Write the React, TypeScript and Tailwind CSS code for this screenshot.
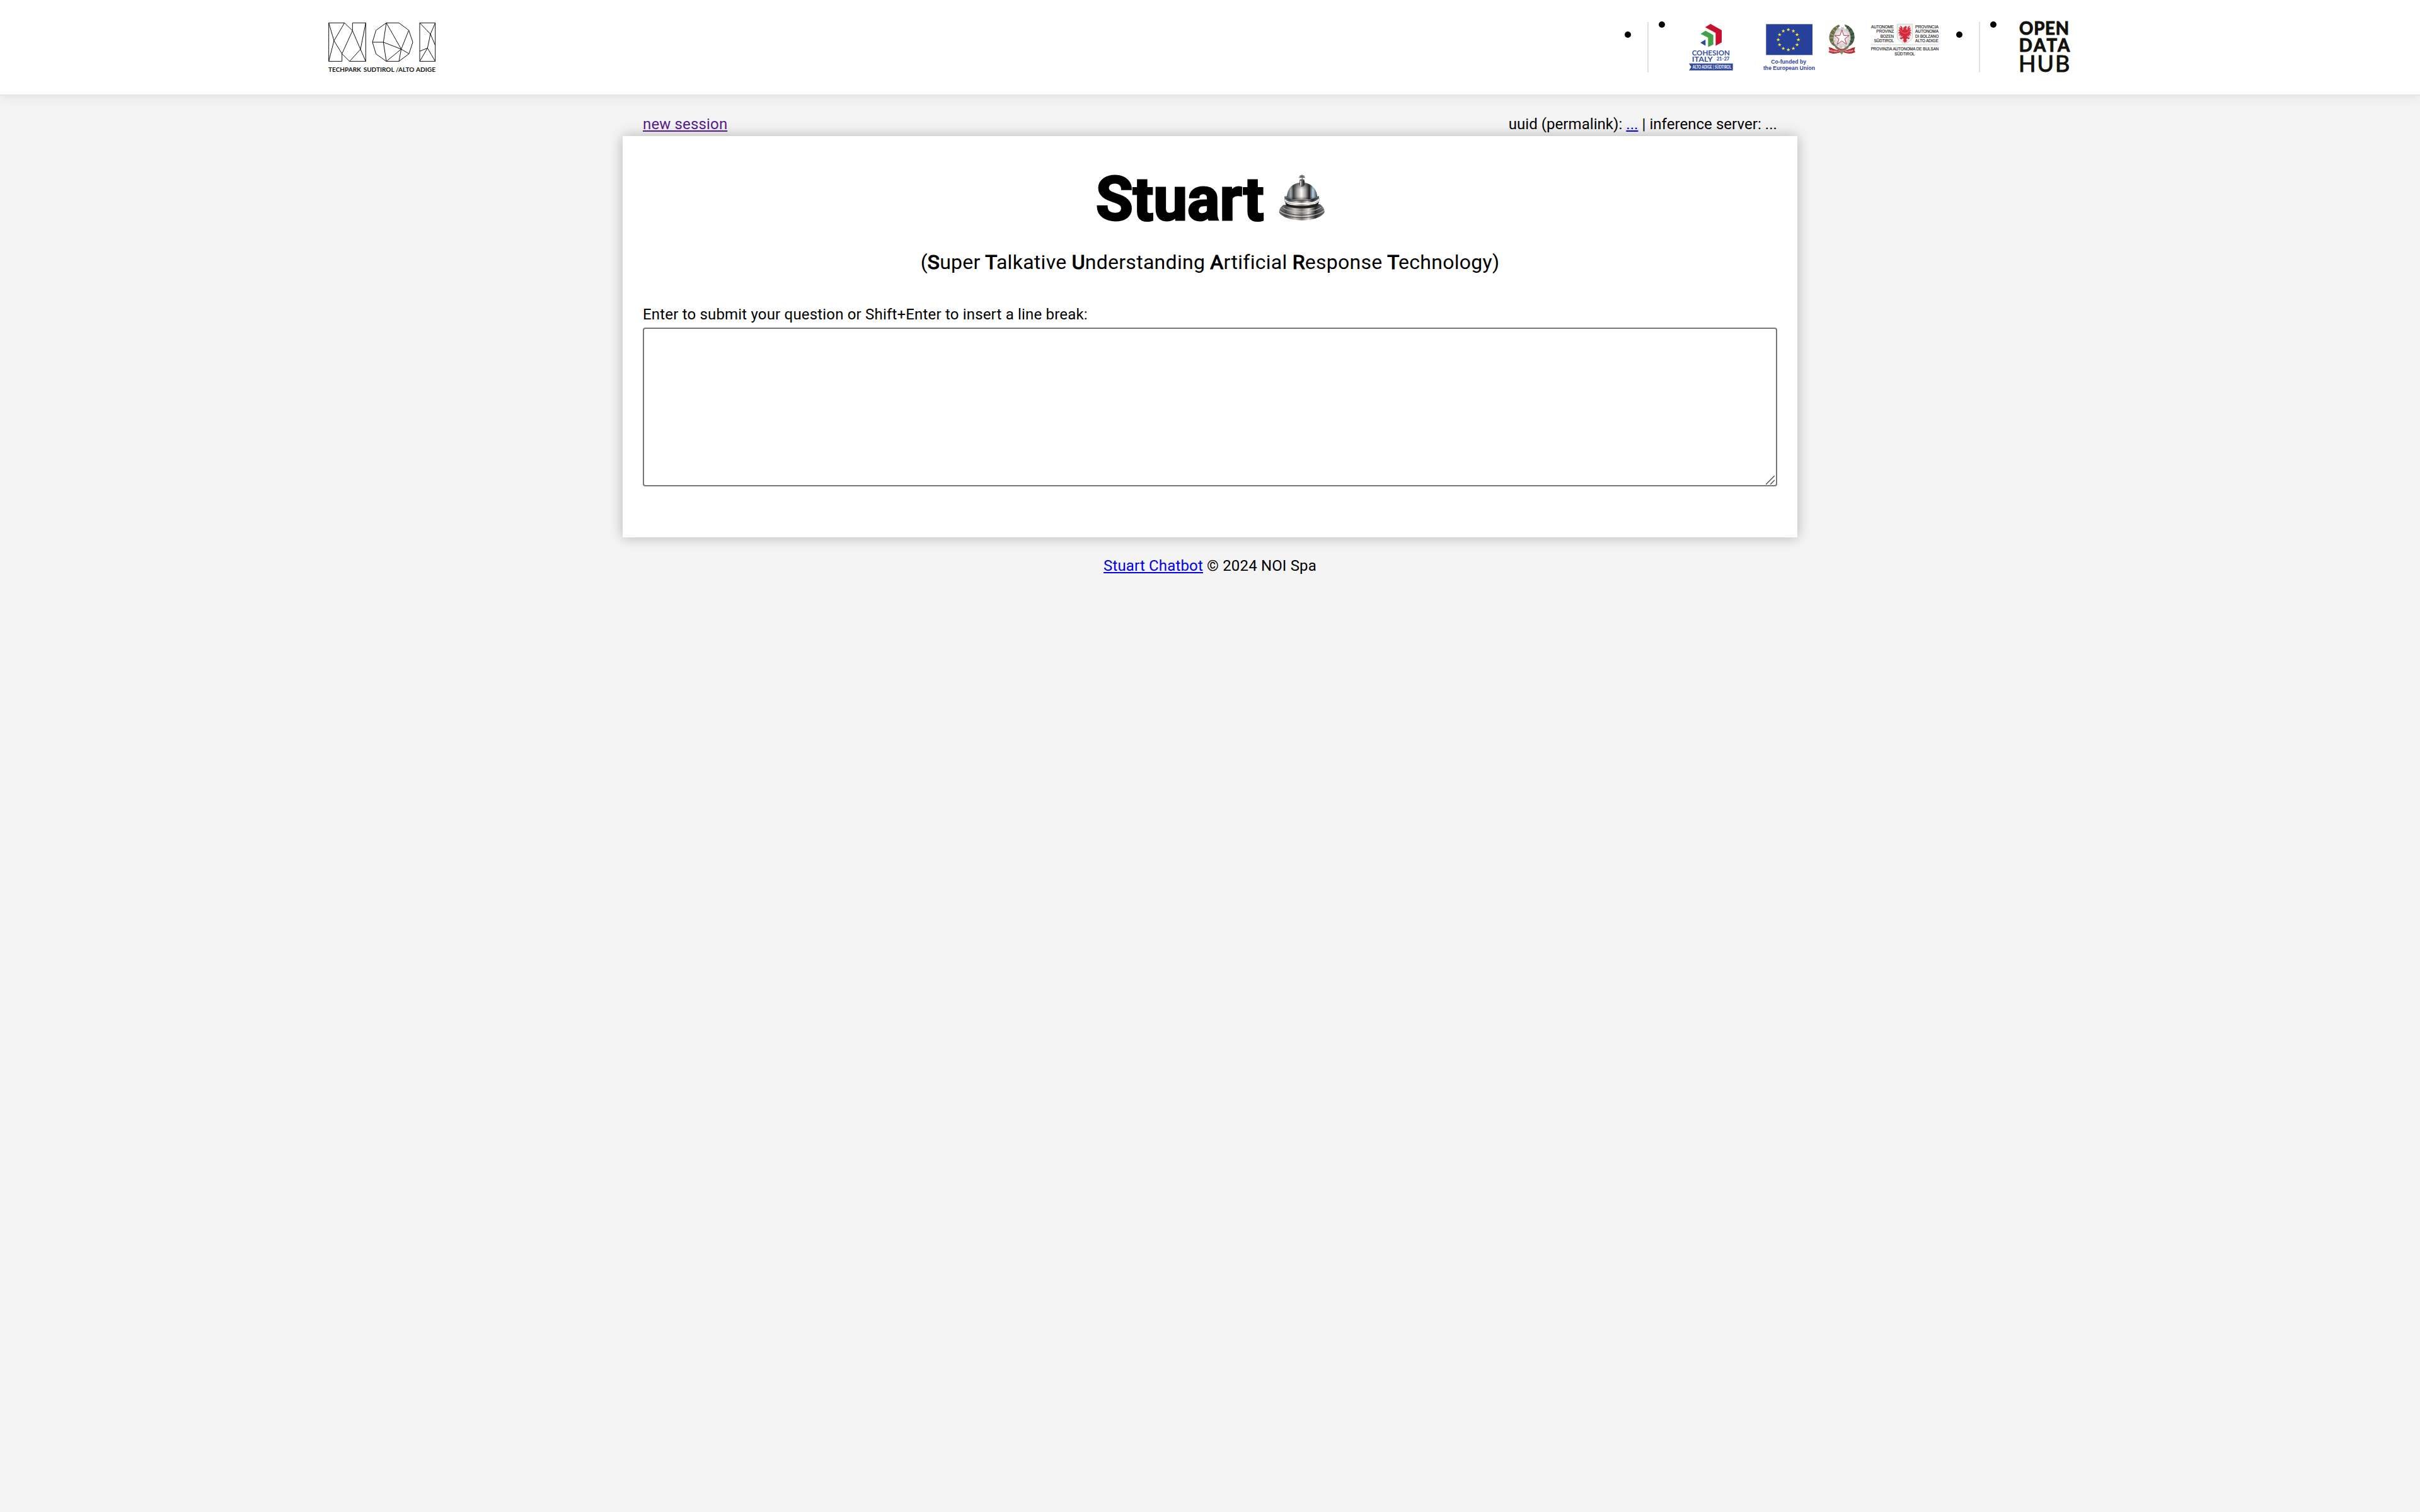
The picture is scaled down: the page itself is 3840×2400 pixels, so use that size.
import React from "react";

function NoiLogo() {
  return (
    <svg className="h-20 w-[172px] overflow-visible" viewBox="60 45 516 240" fill="none" stroke="#111" strokeWidth="3">
      <path d="M65 49H140L178 86V49H241V232H164L128 196V232H65Z" />
      <path d="M65 49L90 134L140 49M65 232L90 134L128 196L178 86L216 175L241 49M216 175L241 232M216 175L164 232" />
      <path d="M339 49H399L446 84L465 141L447 196L399 232H339L290 197L273 141L290 84Z" />
      <path d="M273 141H325L339 49L410 174L446 84M325 141L339 232L410 174L325 141M410 174L447 196M410 174L399 232" />
      <path d="M498 49H572V232H498Z" />
      <path d="M498 49L549 102L572 49M572 156L549 102L535 169L572 232M498 184L535 169L498 232" />
      <g fontSize="30" fontFamily="Lato, sans-serif" fontWeight="700" fill="#111" stroke="none">
        <text x="63" y="281" textLength="156" lengthAdjust="spacingAndGlyphs">TECHPARK</text>
        <text x="230" y="281" textLength="147" lengthAdjust="spacingAndGlyphs">SUDTIROL</text>
        <text x="384" y="281" textLength="88" lengthAdjust="spacingAndGlyphs">/ALTO</text>
        <text x="480" y="281" textLength="93" lengthAdjust="spacingAndGlyphs">ADIGE</text>
      </g>
    </svg>
  );
}

function CohesionLogo() {
  return (
    <svg className="h-20 w-[70px] overflow-visible" viewBox="360 45 210 240" fontFamily="Lato, sans-serif">
      <path d="M463 54L516 84V142L487 158V97L437 70Z" fill="#c8102e" />
      <path d="M439 86L476 107V152L451 164V119L415 101Z" fill="#43a047" />
      <path d="M439 128V158L414 143Z" fill="#2f4a9c" />
      <text x="374" y="204" textLength="181" lengthAdjust="spacingAndGlyphs" fontSize="35" fontWeight="700" fill="#35509f">COHESION</text>
      <text x="374" y="235" textLength="99" lengthAdjust="spacingAndGlyphs" fontSize="35" fontWeight="700" fill="#35509f">ITALY</text>
      <text x="491" y="228" textLength="62" lengthAdjust="spacingAndGlyphs" fontSize="24" fontWeight="900" fill="#35509f">21-27</text>
      <path d="M360 242H569V275H360L371 259Z" fill="#2f4a9c" />
      <text x="377" y="266" textLength="184" lengthAdjust="spacingAndGlyphs" fontSize="20" fontWeight="700" fill="#fff">ALTO ADIGE | SÜDTIROL</text>
    </svg>
  );
}

const STAR = "M0 -9L2.4 -2.8L9 -2.8L3.7 1.2L5.6 7.6L0 3.8L-5.6 7.6L-3.7 1.2L-9 -2.8L-2.4 -2.8Z";

function EuLogo() {
  const stars = Array.from({ length: 12 }, (_, i) => {
    const a = (i * Math.PI) / 6;
    return [177 + 48 * Math.sin(a), 129 - 48 * Math.cos(a)];
  });
  return (
    <svg className="h-20 w-[82px] overflow-visible" viewBox="54 45 246 240" fontFamily="Liberation Sans, sans-serif" fontWeight="700">
      <rect x="67" y="55" width="221" height="147" fill="#27419a" />
      {stars.map(([x, y], i) => (
        <path key={i} d={STAR} transform={`translate(${x - 4} ${y})`} fill="#f4e53a" />
      ))}
      <text x="91" y="243" textLength="167" lengthAdjust="spacingAndGlyphs" fontSize="25" fill="#2e459c">Co-funded by</text>
      <text x="54" y="274" textLength="246" lengthAdjust="spacingAndGlyphs" fontSize="25" fill="#2e459c">the European Union</text>
    </svg>
  );
}

function ItalyEmblem() {
  return (
    <svg className="h-20 w-[43px] overflow-visible" viewBox="363 45 129 240">
      <circle cx="428" cy="119" r="45" fill="#dad7d6" stroke="#c3c0be" strokeWidth="9" strokeDasharray="13 10" />
      <circle cx="428" cy="118" r="32" fill="#e9e6e6" stroke="#c9c5c4" strokeWidth="2" />
      <path d="M413 58C383 70 361 100 370 133C376 154 392 162 410 167C390 150 383 137 390 112C395 88 406 76 419 64Z" fill="#66704a" />
      <path d="M441 57C466 61 488 86 488 116C488 146 467 162 446 168C466 149 472 136 469 112C466 89 455 75 443 65Z" fill="#4d6249" />
      <path d="M372 100L390 108M371 120L391 120M378 143L394 134M384 80L399 92M398 66L408 78" stroke="#b5a377" strokeWidth="4" />
      <path d="M486 98L469 106M488 118L470 120M480 142L466 134M474 77L460 89M459 64L452 76" stroke="#2c4536" strokeWidth="4" />
      <path d="M428 82L437 109L463 109L442 125L450 151L428 135L406 151L414 125L393 109L419 109Z" fill="#fff" stroke="#b93850" strokeWidth="3" />
      <path d="M389 151L428 176L467 151L457 170L428 187L399 170Z" fill="#7d735c" />
      <path d="M365 164L381 169C399 181 414 177 428 172C442 177 458 181 475 169L491 164L487 180L492 188C468 200 449 194 428 187C407 194 388 200 364 188L370 180Z" fill="#b5282d" />
      <path d="M428 174L439 181L428 200L417 188Z" fill="#8e8467" />
      <path id="ribbon-left" d="M370 184C388 192 404 190 425 183" fill="none" />
      <path id="ribbon-right" d="M435 184C452 191 470 190 488 182" fill="none" />
      <g fontSize="12" fontFamily="Liberation Sans, sans-serif" fontWeight="700" fill="#ecc9c4">
        <text><textPath href="#ribbon-left" textLength="54" lengthAdjust="spacingAndGlyphs">REPVBBLICA</textPath></text>
        <text><textPath href="#ribbon-right" textLength="50" lengthAdjust="spacingAndGlyphs">ITALIANA</textPath></text>
      </g>
    </svg>
  );
}

function ProvinceLogo() {
  const left: [string, number, number][] = [
    ["AUTONOME", 57, 108],
    ["PROVINZ", 82, 83],
    ["BOZEN", 101, 64],
    ["SÜDTIROL", 71, 94],
  ];
  const right: [string, number][] = [
    ["PROVINCIA", 111],
    ["AUTONOMA", 111],
    ["DI BOLZANO", 112],
    ["ALTO ADIGE", 110],
  ];
  return (
    <svg className="h-20 w-[109px] overflow-visible" viewBox="54 45 327 240" fontFamily="Liberation Sans, sans-serif" fontSize="19.5" fill="#222" stroke="#222" strokeWidth="0.5">
      {left.map(([t, x, w], i) => (
        <text key={t} x={x} y={73.5 + i * 22.7} textLength={w} lengthAdjust="spacingAndGlyphs">{t}</text>
      ))}
      {right.map(([t, w], i) => (
        <text key={t} x={267} y={73.5 + i * 22.7} textLength={w} lengthAdjust="spacingAndGlyphs">{t}</text>
      ))}
      <path d="M181 55H254V112C254 130 240 141 218 146C196 141 181 130 181 112Z" fill="#f3f0f0" stroke="#bdb8b8" strokeWidth="2" />
      <path d="M216 68L223 64L227 70L223 78L231 84C229 74 232 66 241 64L236 74L245 72L240 81L248 84L241 90L249 98L240 98L245 109L236 105L238 115L228 109L231 118L241 120L236 126L228 122L224 128L228 136L218 142L209 136L213 128L208 122L199 127L194 120L204 118L208 109L198 115L199 105L190 109L196 98L186 98L194 90L187 83L195 81L190 71L200 74L196 64C205 66 208 74 206 84L213 78L209 74Z" fill="#d42a3c" stroke="#d42a3c" strokeWidth="1.5" />
      <path d="M196 82C202 96 210 98 218 98C226 98 235 96 240 82" stroke="#f0b8a0" strokeWidth="1.5" fill="none" />
      <path d="M57 153H379" stroke="#c4c4c4" strokeWidth="2.5" />
      <text x="56" y="180" textLength="323" lengthAdjust="spacingAndGlyphs">PROVINZIA AUTONOMA DE BULSAN</text>
      <text x="169" y="203" textLength="96" lengthAdjust="spacingAndGlyphs">SÜDTIROL</text>
    </svg>
  );
}

function OpenDataHubLogo() {
  return (
    <svg className="h-20 w-[81px] overflow-visible" viewBox="342 45 243 240" fontFamily="Lato, sans-serif" fill="#12110c" stroke="#12110c" strokeWidth="3">
      <text x="342" y="106" textLength="237" fontSize="83" fontWeight="700">OPEN</text>
      <text x="341" y="186" textLength="242" fontSize="83" fontWeight="700">DATA</text>
      <text x="339" y="283" textLength="244" fontSize="108" fontWeight="400">HUB</text>
    </svg>
  );
}

function Bell() {
  return (
    <svg className="-mt-[5px] ml-6 h-[74px] w-[74px]" viewBox="988 79 222 222">
      <defs>
        <linearGradient id="dome" x1="0" x2="1">
          <stop offset="0" stopColor="#4c5254" />
          <stop offset=".13" stopColor="#9fb0b5" />
          <stop offset=".22" stopColor="#3a3838" />
          <stop offset=".34" stopColor="#a9a9a9" />
          <stop offset=".48" stopColor="#fbfaf8" />
          <stop offset=".62" stopColor="#a39f9c" />
          <stop offset=".74" stopColor="#1e1c1d" />
          <stop offset=".86" stopColor="#b4d8ec" />
          <stop offset="1" stopColor="#3d4144" />
        </linearGradient>
        <linearGradient id="shade" x1="0" x2="0" y1="0" y2="1">
          <stop offset="0" stopColor="#3a3433" stopOpacity=".7" />
          <stop offset=".4" stopColor="#3a3433" stopOpacity="0" />
          <stop offset=".8" stopColor="#111" stopOpacity="0" />
          <stop offset="1" stopColor="#111" stopOpacity=".5" />
        </linearGradient>
        <linearGradient id="base" x1="0" x2="1">
          <stop offset="0" stopColor="#8b8f92" />
          <stop offset=".15" stopColor="#4b4a4b" />
          <stop offset=".35" stopColor="#c9c5c2" />
          <stop offset=".5" stopColor="#7a7472" />
          <stop offset=".65" stopColor="#e2dfdc" />
          <stop offset=".8" stopColor="#292829" />
          <stop offset="1" stopColor="#86909a" />
        </linearGradient>
      </defs>
      <path d="M1010 224C1000 232 988 244 990 259C1000 283 1052 297 1098 297C1144 297 1196 283 1206 258C1208 245 1198 230 1184 220Z" fill="url(#base)" />
      <path d="M991 259C1030 294 1166 294 1205 257M995 246C1034 281 1160 281 1201 245" fill="none" stroke="#3b3838" strokeWidth="3" />
      <path d="M993 252C1034 287 1162 287 1203 251M1008 236C1040 264 1156 264 1190 234" fill="none" stroke="#c4c5c6" strokeWidth="3" />
      <path d="M1018 208C1034 236 1164 236 1180 206L1174 228C1142 244 1056 244 1024 228Z" fill="#211f20" />
      <path d="M1016 182L1014 204C1030 228 1166 228 1182 202L1180 182Z" fill="url(#base)" />
      <path d="M1016 199C1034 224 1162 224 1180 197" fill="none" stroke="#f3f4f4" strokeWidth="6" />
      <path d="M1016 187C1034 211 1162 211 1180 185" fill="none" stroke="#2b2a2b" strokeWidth="3" />
      <path d="M1027 186C1028 146 1056 117 1098 117C1140 117 1170 146 1171 184C1150 204 1048 206 1027 186Z" fill="url(#dome)" />
      <path d="M1027 186C1028 146 1056 117 1098 117C1140 117 1170 146 1171 184C1150 204 1048 206 1027 186Z" fill="url(#shade)" />
      <path d="M1088 104Q1098 97 1110 104L1114 128Q1100 146 1086 128Z" fill="#565656" />
      <path d="M1093 108V132" stroke="#e8eaeb" strokeWidth="5" />
      <path d="M1107 108V130" stroke="#1e1e1e" strokeWidth="4" />
      <path d="M1099 82V104M1087 92L1111 92M1090 86L1108 86" stroke="#625e5c" strokeWidth="5" strokeLinecap="round" />
      <path d="M1097 94V102" stroke="#ddd" strokeWidth="3" />
    </svg>
  );
}

function Dot({ low = false }: { low?: boolean }) {
  return <span className={`block size-2.5 rounded-full bg-black ${low ? "mt-[15px]" : "-mt-px"}`} />;
}

function Divider() {
  return <span className="mr-4 ml-[26px] block h-20 w-0.5 bg-[#dee2e6]" />;
}

function Initial({ children }: { children: string }) {
  return <b className="font-normal [-webkit-text-stroke:1.2px_black]">{children}</b>;
}

export default function App() {
  return (
    <div className="min-h-[2400px] w-full bg-[#f4f4f4] font-['Roboto',sans-serif] text-[24px] leading-7 text-black">
      <header className="flex h-[152px] items-start justify-between border-b-2 border-[#e5e5ea] bg-white pt-[35px] pr-[555px] pl-[520px] shadow-[0_4px_16px_rgba(0,0,0,0.07)]">
        <NoiLogo />
        <div className="flex items-start">
          <Dot low />
          <Divider />
          <Dot />
          <div className="ml-[38px] flex">
            <CohesionLogo />
            <div className="ml-12"><EuLogo /></div>
            <div className="ml-[21px]"><ItalyEmblem /></div>
            <div className="mr-[27px] ml-6"><ProvinceLogo /></div>
          </div>
          <Dot low />
          <Divider />
          <Dot />
          <div className="ml-9"><OpenDataHubLogo /></div>
        </div>
      </header>

      <div className="mx-auto w-[1864px]">
        <nav className="flex h-16 items-end justify-between px-8 pb-[5px]">
          <a href="#" className="tracking-[0.15px] text-[#551a8b] underline">new session</a>
          <div className="tracking-[0.05px]">
            uuid (permalink): <a href="#" className="text-[#0000ee] underline">...</a> | inference server: ...
          </div>
        </nav>
        <main className="h-[637px] bg-white px-8 shadow-[0_0_20px_rgba(0,0,0,0.27)]">
          <h1 className="flex h-[168px] items-center justify-center pt-8 pl-0.5 text-[96px] leading-none font-bold [-webkit-text-stroke:3px_black]">
            Stuart
            <Bell />
          </h1>
          <p className="mt-3 text-center text-[32px] leading-10 tracking-[0.28px]">
            (<Initial>S</Initial>uper <Initial>T</Initial>alkative <Initial>U</Initial>nderstanding <Initial>A</Initial>rtificial <Initial>R</Initial>esponse <Initial>T</Initial>echnology)
          </p>
          <label htmlFor="question" className="mt-[49px] block tracking-[0.18px]">
            Enter to submit your question or Shift+Enter to insert a line break:
          </label>
          <div className="relative mt-[7px] h-[252px]">
            <textarea id="question" className="block h-full w-full resize-none rounded-[4px] border-2 border-[#767676] bg-white" />
            <svg className="absolute right-1 bottom-[3px] size-[14px]" viewBox="0 0 14 14" stroke="#555" strokeWidth="1.5">
              <path d="M0 14L14 0M7 14L14 7" />
            </svg>
          </div>
        </main>
        <footer className="mt-[31px] text-center tracking-[0.16px]">
          <a href="#" className="text-[#0000ee] underline">Stuart Chatbot</a> © 2024 NOI Spa
        </footer>
      </div>
    </div>
  );
}
